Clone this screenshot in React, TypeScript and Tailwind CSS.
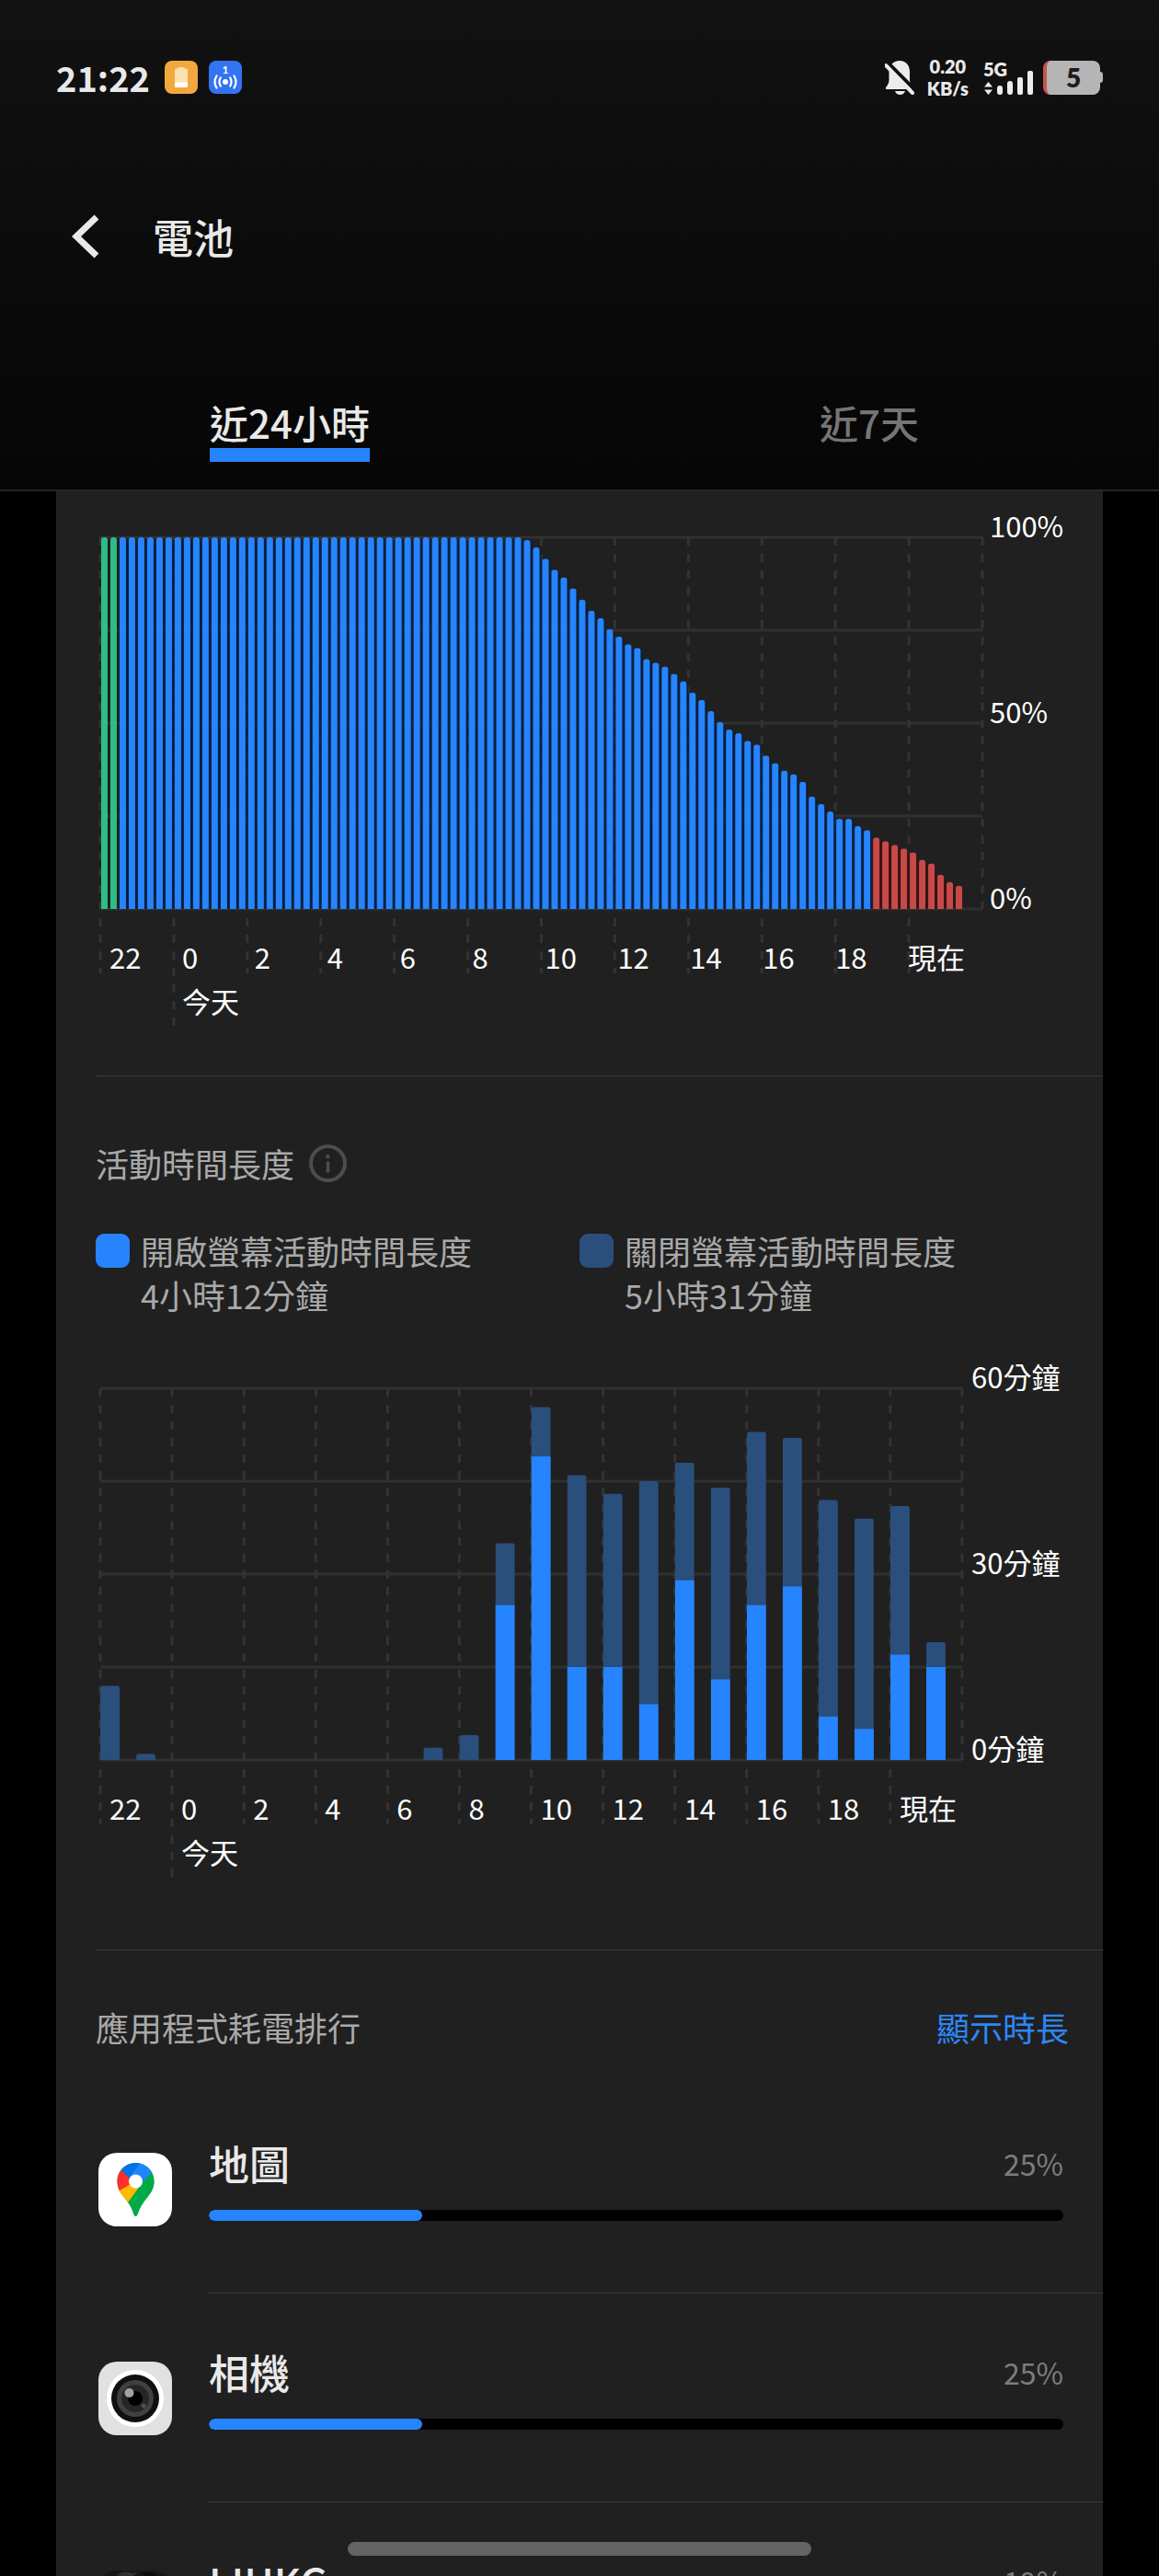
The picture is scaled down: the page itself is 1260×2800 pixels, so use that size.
import React, { useState } from 'react';

type AppUsage = {
  id: string;
  name: string;
  percent: number;
  icon: React.ReactNode;
};

type HourUsage = {
  total: number;
  screenOn: number;
};

const PLOT_HEIGHT = 404;

const axisLabels = ['22', '0', '2', '4', '6', '8', '10', '12', '14', '16', '18', '現在'];

// One sample every 15 minutes
const batteryLevels: number[] = [
  ...Array(46).fill(100),
  99, 97, 94, 91, 89, 86, 83, 80, 78, 75, 73, 71, 70, 67, 66, 65, 63, 61, 58, 56, 53, 50, 48, 47, 45, 44,
  41, 39, 37, 36, 34, 30, 28, 26, 24, 24, 22, 21, 19, 18, 17, 16, 15, 13, 12, 9, 7, 6,
];

const hours: HourUsage[] = [
  { total: 12, screenOn: 0 },
  { total: 1, screenOn: 0 },
  { total: 0, screenOn: 0 },
  { total: 0, screenOn: 0 },
  { total: 0, screenOn: 0 },
  { total: 0, screenOn: 0 },
  { total: 0, screenOn: 0 },
  { total: 0, screenOn: 0 },
  { total: 0, screenOn: 0 },
  { total: 2, screenOn: 0 },
  { total: 4, screenOn: 0 },
  { total: 35, screenOn: 25 },
  { total: 57, screenOn: 49 },
  { total: 46, screenOn: 15 },
  { total: 43, screenOn: 15 },
  { total: 45, screenOn: 9 },
  { total: 48, screenOn: 29 },
  { total: 44, screenOn: 13 },
  { total: 53, screenOn: 25 },
  { total: 52, screenOn: 28 },
  { total: 42, screenOn: 7 },
  { total: 39, screenOn: 5 },
  { total: 41, screenOn: 17 },
  { total: 19, screenOn: 15 },
];

const MapsIcon: React.FC = () => (
  <svg className="h-20 w-20" viewBox="0 0 80 80" aria-hidden="true">
    <defs>
      <clipPath id="pin">
        <path d="M40.500 11C29 11 20.500 20 20.500 31c0 7 3 12 7 17 5 6 8.500 11 10.500 18 .6 2 1.200 3 2.500 3s1.900-1 2.500-3c2-7 5.500-12 10.500-18 4-5 7-10 7-17 0-11-8.500-20-20-20z" />
      </clipPath>
    </defs>
    <rect width="80" height="80" rx="20" fill="#fff" />
    <g clipPath="url(#pin)">
      <rect width="80" height="80" fill="#00aa47" />
      <path d="M0 58L20 40 32 26 50 36 30 58 0 88z" fill="#ffba00" />
      <path d="M10 10L24 18 40 31 18 44 10 50z" fill="#ff2f2c" />
      <path d="M24 18L34 28 41 31 52 0H20z" fill="#0073e6" />
      <path d="M45 12L34 26 48 37 60 18 50 5z" fill="#2086ff" />
      <path d="M61 18L48 32 32 54 50 70 70 40z" fill="#00aa47" />
    </g>
    <circle cx="40.500" cy="31" r="7.500" fill="#fff" />
  </svg>
);

const CameraIcon: React.FC = () => (
  <svg className="h-20 w-20" viewBox="0 0 80 80" aria-hidden="true">
    <rect width="80" height="80" rx="20" fill="#e1e1e1" />
    <circle cx="40" cy="40" r="31" fill="#fff" />
    <circle cx="40" cy="40" r="26" fill="#101010" />
    <circle cx="40" cy="40" r="20" fill="#404040" />
    <circle cx="40" cy="40" r="15" fill="#262626" />
    <circle cx="40" cy="40" r="8" fill="#000" />
    <circle cx="33.500" cy="34" r="5" fill="#a3a3a3" />
    <circle cx="49" cy="48" r="2.500" fill="#505050" />
  </svg>
);

const ForumIcon: React.FC = () => (
  <svg className="h-20 w-20" viewBox="0 0 80 80" aria-hidden="true">
    <rect width="80" height="80" rx="20" fill="#161616" />
    <path d="M20 5Q28-1 38 3L42 1Q40 8 28 7z" fill="#303030" />
    <path d="M46 3Q58-1 64 6L54 8z" fill="#0c0c0c" />
  </svg>
);

const apps: AppUsage[] = [
  { id: 'maps', name: '地圖', percent: 25, icon: <MapsIcon /> },
  { id: 'camera', name: '相機', percent: 25, icon: <CameraIcon /> },
  { id: 'lihkg', name: 'LIHKG', percent: 19, icon: <ForumIcon /> },
];

const StatusBar: React.FC = () => (
  <div className="flex h-[50px] items-center justify-between px-[61px]">
    <div className="flex items-center gap-3">
      <span className="mr-1 text-[38px] leading-[50px] font-bold">21:22</span>
      <svg className="h-9 w-9" viewBox="0 0 36 36" aria-hidden="true">
        <rect width="36" height="36" rx="8" fill="#f2a83c" />
        <path d="M11 10a1.500 1.500 0 0 1 1.500-1.500H14.500V8a1 1 0 0 1 1-1h5a1 1 0 0 1 1 1v.5h2A1.500 1.500 0 0 1 25 10v18a1 1 0 0 1-1 1H12a1 1 0 0 1-1-1z" fill="#fbe0b0" />
        <path d="M11 23.500h14V28a1 1 0 0 1-1 1H12a1 1 0 0 1-1-1z" fill="#fff" />
      </svg>
      <svg className="h-9 w-9" viewBox="0 0 36 36" aria-hidden="true">
        <rect width="36" height="36" rx="8" fill="#3374f0" />
        <text x="18" y="14" textAnchor="middle" fontFamily="Lato" fontSize="12" fontWeight="700" fill="#fff">1</text>
        <circle cx="18" cy="23" r="3" fill="#fff" />
        <path d="M12.800 18.500q-2.600 4.500 0 9M23.200 18.500q2.600 4.500 0 9M8.500 16.500q-4 6.500 0 13M27.500 16.500q4 6.500 0 13" stroke="#fff" strokeWidth="2.200" strokeLinecap="round" fill="none" />
      </svg>
    </div>
    <div className="flex items-center font-['Lato',sans-serif] font-extrabold">
      <svg className="h-[38px] w-8" viewBox="0 0 32 38" aria-hidden="true">
        <path d="M16 1C9 1 4.500 6 4.500 13v9c0 3-1 5-3.500 8v2h29v-2c-2-3-3-5-3-8v-9C27 6 23 1 16 1z" fill="#ececec" />
        <path d="M11 34h11q-1.500 4-5.500 4T11 34z" fill="#ececec" />
        <path d="M2 2L33 33" stroke="#101010" strokeWidth="4" />
        <path d="M1 6L30 36" stroke="#ececec" strokeWidth="4" strokeLinecap="round" />
      </svg>
      <div className="ml-[14px] text-center text-[20px] leading-6">
        <p>0.20</p>
        <p>KB/s</p>
      </div>
      <div className="ml-4 h-[42px] w-[55px]">
        <p className="text-[20px] leading-6">5G</p>
        <svg className="-mt-3 h-[28px] w-[55px]" viewBox="0 10 55 28" aria-hidden="true">
          <path d="M5.500 24L10 29.500H1zM5.500 38L10 32.500H1z" fill="#ececec" />
          <rect x="15" y="28" width="6" height="10" rx="3" fill="#ececec" />
          <rect x="26" y="23" width="6" height="15" rx="3" fill="#ececec" />
          <rect x="37" y="19" width="6" height="19" rx="2" fill="#ececec" />
          <rect x="48" y="12" width="6" height="26" rx="2" fill="#ececec" />
        </svg>
      </div>
      <div className="ml-[10px] flex items-center">
        <span className="h-[37px] w-[62px] rounded-lg border-l-4 border-[#c5564e] bg-[#b5b5b5] text-center text-[28px] leading-[37px] text-[#1c1c1c]">
          5
        </span>
        <span className="h-3 w-[3px] rounded-r-sm bg-[#b5b5b5]" />
      </div>
    </div>
  </div>
);

const GridLines: React.FC = () => (
  <>
    {[0, 1, 2, 3, 4].map(i => (
      <line key={i} x1="0" x2="100%" y1={(PLOT_HEIGHT / 4) * i} y2={(PLOT_HEIGHT / 4) * i} stroke="#303030" strokeWidth="3" />
    ))}
    {Array.from({ length: 13 }, (_, i) => (
      <line
        key={i}
        x1={`${(i / 12) * 100}%`}
        x2={`${(i / 12) * 100}%`}
        y1="0"
        y2={PLOT_HEIGHT}
        stroke="#333"
        strokeWidth="3"
        strokeDasharray="9 9"
      />
    ))}
  </>
);

type ChartProps = {
  label: string;
  scale: string[];
  scaleClass: string;
  axisClass: string;
  children: React.ReactNode;
};

const Chart: React.FC<ChartProps> = ({ label, scale, scaleClass, axisClass, children }) => (
  <div className="flex pl-12 text-[31px] text-white">
    <div className="min-w-0 flex-1">
      <div className="pt-[33px] pb-[10px]">
        <svg className="block h-[404px] w-full overflow-visible" role="img" aria-label={label}>
          <GridLines />
          {children}
        </svg>
      </div>
      <div className="relative h-[118px] pt-[18px]">
        <svg className="absolute inset-0 h-full w-full overflow-visible" aria-hidden="true">
          {axisLabels.map((text, i) => (
            <line
              key={text}
              x1={`${(i / 12) * 100}%`}
              x2={`${(i / 12) * 100}%`}
              y1="0"
              y2={i === 1 ? 118 : 60}
              stroke="#333"
              strokeWidth="3"
              strokeDasharray="9 9"
            />
          ))}
        </svg>
        <div className={`relative grid grid-cols-12 leading-[48px] ${axisClass}`}>
          {axisLabels.map(text => (
            <div key={text} className="pl-[10px] whitespace-nowrap">
              <p>{text}</p>
              {text === '0' && <p>今天</p>}
            </div>
          ))}
        </div>
      </div>
    </div>
    <div className={`flex h-[444px] flex-col justify-between leading-[40px] ${scaleClass}`}>
      {scale.map(text => (
        <span key={text}>{text}</span>
      ))}
    </div>
  </div>
);

const barColor = (index: number, level: number) => {
  if (index < 2) return '#2ebd85';
  return level < 20 ? '#c74a48' : '#2684ff';
};

const gapColor = (index: number, level: number) => {
  if (index < 2) return 'none';
  return level < 20 ? '#3a1214' : '#082040';
};

const BatteryBars: React.FC = () => (
  <>
    {batteryLevels.map((level, i) => {
      const height = Math.min(PLOT_HEIGHT, level * 4.04 + 1);
      const x = `${(i / 96) * 100}%`;
      return (
        <g key={i}>
          {i < batteryLevels.length - 1 && (
            <rect x={x} y={PLOT_HEIGHT - height + 3} width="10" height={height - 3} fill={gapColor(i, level)} fillOpacity="0.85" />
          )}
          <svg x={x} y={PLOT_HEIGHT - height} width="9" height={height}>
            <rect x="1" width="7" height={height + 8} rx="3" fill={barColor(i, level)} />
          </svg>
        </g>
      );
    })}
  </>
);

const ActivityBars: React.FC = () => (
  <>
    {hours.map((hour, i) => {
      const total = (hour.total / 60) * PLOT_HEIGHT;
      const on = (hour.screenOn / 60) * PLOT_HEIGHT;
      return (
        <svg key={i} x={`${(i / 24) * 100}%`} y={PLOT_HEIGHT - total} width="22" height={total}>
          <rect width="21" height={total + 8} rx="3" fill="#2a4f7c" />
          <rect y={total - on} width="21" height={on} fill="#2684ff" />
        </svg>
      );
    })}
  </>
);

const Legend: React.FC<{ swatch: string; title: string; value: string }> = ({ swatch, title, value }) => (
  <div className="flex gap-3">
    <span className={`mt-[6px] h-[37px] w-[37px] shrink-0 rounded-[9px] ${swatch}`} />
    <div>
      <p>{title}</p>
      <p>{value}</p>
    </div>
  </div>
);

const App: React.FC = () => {
  const [tab, setTab] = useState('24h');
  const tabs = [
    { id: '24h', label: '近24小時' },
    { id: '7d', label: '近7天' },
  ];

  return (
    <div className="relative flex h-screen flex-col overflow-hidden bg-black font-['Noto_Sans_CJK_TC',sans-serif] text-[#e9e9e9]">
      <header className="border-b-2 border-[#262626] bg-linear-to-b from-[#121212] to-[#060606] pt-[59px]">
        <StatusBar />
        <div className="mt-[118px] flex h-[60px] items-center gap-[58px] pl-[78px]">
          <button type="button" aria-label="返回">
            <svg className="h-12 w-[30px]" viewBox="0 0 30 48" aria-hidden="true">
              <path d="M27 3L5 24l22 21" stroke="#e9e9e9" strokeWidth="7" fill="none" />
            </svg>
          </button>
          <h1 className="text-[44px] leading-[60px] font-medium">電池</h1>
        </div>
        <nav className="mt-[144px] grid grid-cols-2 pb-[30px]">
          {tabs.map(item => (
            <button
              key={item.id}
              type="button"
              onClick={() => setTab(item.id)}
              className={`justify-self-center border-b-[15px] text-[42px] leading-[56px] font-medium ${
                tab === item.id ? 'border-[#2684ff]' : 'border-transparent text-[#757575]'
              }`}
            >
              {item.label}
            </button>
          ))}
        </nav>
      </header>

      <main className="mx-[61px] min-h-0 flex-1 overflow-hidden bg-[#202020]">
        <section className="pt-[17px] pb-[53px]">
          <Chart label="電池電量" scale={['100%', '50%', '0%']} scaleClass="w-[131px] pl-2" axisClass="mr-3">
            <BatteryBars />
          </Chart>
        </section>

        <section className="ml-[43px] border-t border-[#3a3a3a] pt-[70px]">
          <div className="flex items-center gap-4 text-[36px] leading-[48px] text-[#a9a9a9]">
            <h2>活動時間長度</h2>
            <button type="button" aria-label="說明">
              <svg className="h-[41px] w-[41px]" viewBox="0 0 41 41" aria-hidden="true">
                <circle cx="20.500" cy="20.500" r="18.500" stroke="#4d4d4d" strokeWidth="4" fill="none" />
                <circle cx="20.500" cy="13" r="2.200" fill="#4d4d4d" />
                <path d="M20.500 18.500v12" stroke="#4d4d4d" strokeWidth="3.500" />
              </svg>
            </button>
          </div>
          <div className="mt-[47px] mr-[43px] grid grid-cols-2 text-[36px] leading-[48px] text-[#a9a9a9]">
            <Legend swatch="bg-[#2684ff]" title="開啟螢幕活動時間長度" value="4小時12分鐘" />
            <Legend swatch="bg-[#2a4f7c]" title="關閉螢幕活動時間長度" value="5小時31分鐘" />
          </div>
        </section>

        <div className="pt-[45px] pb-[78px]">
          <Chart label="活動時間長度" scale={['60分鐘', '30分鐘', '0分鐘']} scaleClass="w-[153px] pl-[10px]" axisClass="">
            <ActivityBars />
          </Chart>
        </div>

        <section className="ml-[43px] border-t border-[#3a3a3a] pt-[59px]">
          <div className="mr-[37px] flex items-center justify-between text-[36px] leading-[48px]">
            <h2 className="text-[#a9a9a9]">應用程式耗電排行</h2>
            <button type="button" className="text-[#2e86f5]">顯示時長</button>
          </div>
          <ul className="mt-[39px] pl-[3px]">
            {apps.map(app => (
              <li key={app.id} className="flex gap-10">
                <div className="shrink-0 pt-[74px]">{app.icon}</div>
                <div className="flex-1 border-b border-[#3a3a3a] pt-[57px] pb-[78px]">
                  <div className="mr-[43px]">
                    <div className="flex items-center justify-between leading-[56px]">
                      <h3 className="text-[44px] font-medium">{app.name}</h3>
                      <span className="text-[32px] text-[#7c7c7c]">{app.percent}%</span>
                    </div>
                    <div className="mt-[23px] h-3 overflow-hidden rounded-full bg-black">
                      <div className="h-3 rounded-full bg-[#2684ff]" style={{ width: `${app.percent}%` }} />
                    </div>
                  </div>
                </div>
              </li>
            ))}
          </ul>
        </section>
      </main>

      <div className="absolute bottom-[22px] left-1/2 h-[15px] w-[504px] -translate-x-1/2 rounded-full bg-[#646464]" />
    </div>
  );
};

export default App;
